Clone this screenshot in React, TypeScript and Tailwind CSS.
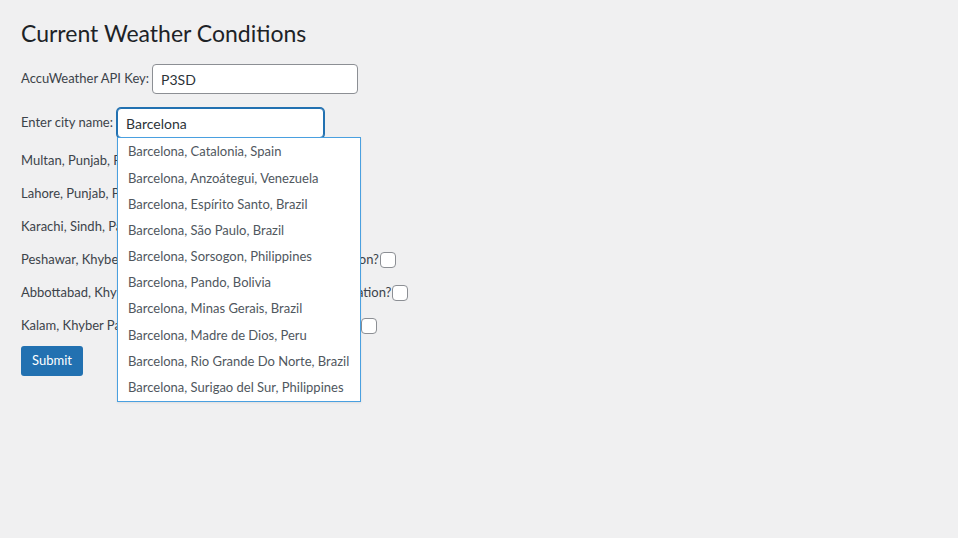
import { useState } from "react";

const LOCATIONS = [
  "Multan, Punjab, Pakistan - Show this location?",
  "Lahore, Punjab, Pakistan - Show this location?",
  "Karachi, Sindh, Pakistan - Show this location?",
  "Peshawar, Khyber Pakhtunkhwa, Pakistan - Show this location?",
  "Abbottabad, Khyber Pakhtunkhwa, Pakistan - Show this location?",
  "Kalam, Khyber Pakhtunkhwa, Pakistan - Show this location?",
];

const SUGGESTIONS = [
  "Barcelona, Catalonia, Spain",
  "Barcelona, Anzoátegui, Venezuela",
  "Barcelona, Espírito Santo, Brazil",
  "Barcelona, São Paulo, Brazil",
  "Barcelona, Sorsogon, Philippines",
  "Barcelona, Pando, Bolivia",
  "Barcelona, Minas Gerais, Brazil",
  "Barcelona, Madre de Dios, Peru",
  "Barcelona, Rio Grande Do Norte, Brazil",
  "Barcelona, Surigao del Sur, Philippines",
];

export default function App() {
  const [apiKey, setApiKey] = useState("P3SD");
  const [city, setCity] = useState("Barcelona");

  return (
    <div className="min-h-[538px] bg-[#f0f0f1] px-[21px] pt-[18px] font-['Lato','Noto_Sans',sans-serif] text-[13px] text-[#3c434a]">
      <h1 className="text-[23px] leading-[30px] text-[#1d2327]">Current Weather Conditions</h1>

      <form className="mt-[16px] flex flex-col" onSubmit={(e) => e.preventDefault()}>
        <label className="flex items-center gap-[3px]">
          <span>AccuWeather API Key:</span>
          <input
            value={apiKey}
            onChange={(e) => setApiKey(e.target.value)}
            className="h-[30px] w-[206px] rounded-[4px] border border-[#8c8f94] bg-white px-[8px] text-[14px] text-[#2c3338] outline-none"
          />
        </label>

        <div className="relative mt-[14px] flex items-center gap-[4px]">
          <span>Enter city name:</span>
          <div className="relative">
            <input
              value={city}
              onChange={(e) => setCity(e.target.value)}
              className="h-[30px] w-[207px] rounded-[4px] border border-[#2271b1] bg-white px-[8px] text-[14px] text-[#2c3338] shadow-[0_0_0_1px_#2271b1] outline-none"
            />
            <ul className="absolute left-0 top-[29px] z-10 w-[244px] border border-[#4aa0e0] bg-white pt-[1px] shadow-[0_1px_2px_rgba(0,0,0,0.08)]">
              {SUGGESTIONS.map((s) => (
                <li key={s} className="flex h-[26.2px] items-center px-[10px] text-[#50575e]">
                  {s}
                </li>
              ))}
            </ul>
          </div>
        </div>

        <div className="mt-[13px] flex flex-col gap-[13px]">
          {LOCATIONS.map((loc) => (
            <label key={loc} className="flex h-[20px] items-center gap-[1px]">
              <span>{loc}</span>
              <input
                type="checkbox"
                className="h-[16px] w-[16px] appearance-none rounded-[4px] border border-[#8c8f94] bg-white"
              />
            </label>
          ))}
        </div>

        <div className="mt-[10px]">
          <button
            type="submit"
            className="h-[30px] rounded-[3px] bg-[#2271b1] px-[11px] text-[13px] text-white"
          >
            Submit
          </button>
        </div>
      </form>
    </div>
  );
}
